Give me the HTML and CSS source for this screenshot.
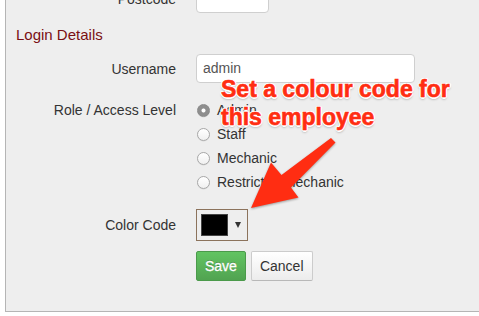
FILE: index.html
```html
<!DOCTYPE html>
<html lang="en">
<head>
    <meta charset="UTF-8">
    <meta name="viewport" content="width=device-width, initial-scale=1.0">
    <title>Employee Details</title>
    <link rel="stylesheet" href="styles.css">
</head>
<body>
    <div class="panel">
        <div class="form-row row-center">
            <label class="form-label">Postcode</label>
            <div class="text-input input-short"></div>
        </div>

        <h3 class="section-title">Login Details</h3>

        <div class="form-row row-center row-username">
            <label class="form-label">Username</label>
            <div class="text-input input-long">admin</div>
        </div>

        <div class="form-row row-role">
            <label class="form-label">Role / Access Level</label>
            <div class="radio-list">
                <div class="radio-item"><span class="radio checked"></span>Admin</div>
                <div class="radio-item"><span class="radio"></span>Staff</div>
                <div class="radio-item"><span class="radio"></span>Mechanic</div>
                <div class="radio-item"><span class="radio"></span>Restricted Mechanic</div>
            </div>
        </div>

        <div class="form-row row-center row-color">
            <label class="form-label">Color Code</label>
            <div class="color-picker">
                <span class="swatch"></span>
                <span class="caret"></span>
            </div>
        </div>

        <div class="form-row row-actions">
            <span></span>
            <div class="actions">
                <button class="btn btn-save">Save</button>
                <button class="btn btn-cancel">Cancel</button>
            </div>
        </div>
    </div>

    <!-- annotation layer -->
    <svg class="arrow" width="479" height="316" viewBox="0 0 479 316">
        <polygon points="331,138 335.5,142.5 291,187.5 298.5,197.5 251,208 271,162.5 281.5,175" fill="#ff2d12"/>
    </svg>
    <div class="note">Set a colour code for<br>this employee</div>
</body>
</html>
```

FILE: styles.css
```css
body {
    margin: 0;
    background: #fff;
    font-family: "Liberation Sans", Arial, sans-serif;
    font-size: 14px;
    color: #333;
    position: relative;
    height: 316px;
    overflow: hidden;
}
.panel {
    margin: -16px 0 0 5px;
    padding: 0 0 30px 0;
    background: #eeeeee;
    border-left: 1px solid #b5b5b5;
    border-bottom: 1px solid #b5b5b5;
}
.form-row {
    display: grid;
    grid-template-columns: 170px 1fr;
    column-gap: 20px;
}
.row-center {
    align-items: center;
}
.form-label {
    text-align: right;
    line-height: 20px;
}
.section-title {
    margin: 12px 0 0 0;
    padding-left: 10px;
    font-size: 15px;
    font-weight: normal;
    line-height: 20px;
    color: #7a0f14;
}
.row-username {
    margin-top: 9px;
}
.text-input {
    box-sizing: border-box;
    height: 29px;
    padding: 0 6px;
    line-height: 27px;
    background: #fff;
    border: 1px solid #cfcfcf;
    border-radius: 4px;
    color: #555;
}
.input-short {
    width: 73px;
}
.input-long {
    width: 219px;
}
.row-role {
    margin-top: 15px;
}
.row-role .form-label {
    line-height: 24px;
}
.radio-item {
    display: flex;
    align-items: center;
    height: 24px;
}
.radio {
    box-sizing: border-box;
    width: 13px;
    height: 13px;
    margin: 0 7px 0 1px;
    border-radius: 50%;
    border: 1px solid #a8a8a8;
    background: linear-gradient(#ffffff, #f0f0f0);
    box-shadow: 0 0.5px 0.5px rgba(0,0,0,0.1);
}
.radio.checked {
    border-color: #8a8a8a;
    background: radial-gradient(circle, #fff 0, #fff 1.6px, #8e8e8e 2.4px, #8e8e8e 100%);
}
.row-color {
    margin-top: 15px;
}
.color-picker {
    box-sizing: border-box;
    width: 52px;
    height: 32px;
    padding: 4px;
    display: flex;
    align-items: center;
    border: 1px solid #8c735c;
}
.swatch {
    box-sizing: border-box;
    width: 27px;
    height: 22px;
    background: #000;
    border: 1px solid #444;
}
.caret {
    margin-left: 7px;
    width: 0;
    height: 0;
    border-left: 3.5px solid transparent;
    border-right: 3.5px solid transparent;
    border-top: 6px solid #333;
}
.row-actions {
    margin-top: 10px;
}
.actions {
    display: flex;
    gap: 5px;
}
.btn {
    box-sizing: border-box;
    height: 30px;
    padding: 0 8px;
    font-family: inherit;
    font-size: 14px;
    line-height: 28px;
    border-radius: 2px;
}
.btn-save {
    color: #fff;
    text-shadow: 0 -1px 0 rgba(0,0,0,0.25);
    -webkit-text-stroke: 0.3px #fff;
    background: linear-gradient(#62c462, #51a351);
    border: 1px solid #4b9a4b;
}
.btn-cancel {
    color: #333;
    background: linear-gradient(#ffffff, #ececec);
    border: 1px solid #cccccc;
    border-bottom-color: #b8b8b8;
}
.arrow {
    position: absolute;
    left: 0;
    top: 0;
    filter: drop-shadow(0 1px 1.2px rgba(0,0,0,0.35));
}
.note {
    position: absolute;
    left: 221px;
    top: 75px;
    font-size: 23px;
    font-weight: bold;
    line-height: 28px;
    color: #ff2d12;
    white-space: nowrap;
    -webkit-text-stroke: 0.6px #ff2d12;
    text-shadow:
        -1.5px 0 0 #fff, 1.5px 0 0 #fff, 0 -1.5px 0 #fff, 0 1.5px 0 #fff,
        -1px -1px 0 #fff, 1px -1px 0 #fff, -1px 1px 0 #fff, 1px 1px 0 #fff,
        0 1.5px 2.5px rgba(0,0,0,0.45);
}
```
